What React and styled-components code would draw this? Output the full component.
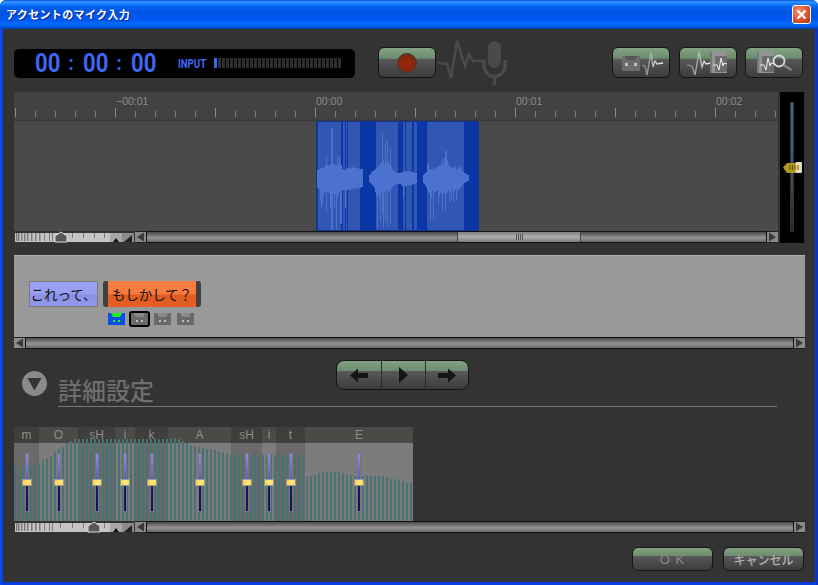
import React from "react";
import styled, { createGlobalStyle } from "styled-components";

const GlobalStyle = createGlobalStyle`
  html, body {
    margin: 0;
    padding: 0;
    background: #fff;
  }
  * {
    box-sizing: border-box;
  }
`;

const JP = `"Noto Sans CJK JP", "Liberation Sans", sans-serif`;
const TEAL = "#4a7272";

const Window = styled.div`
  width: 818px;
  height: 585px;
  display: flex;
  flex-direction: column;
  border-radius: 6px 6px 0 0;
  overflow: hidden;
  background: linear-gradient(90deg, #0a55ee 0, #0a3ee0 3px, #0a3ee0 815px, #0a2fc0 818px);
`;

const TitleBar = styled.div`
  height: 29px;
  flex: none;
  display: flex;
  align-items: center;
  justify-content: space-between;
  padding: 0 7px 1px 6px;
  background: linear-gradient(
    180deg,
    #0058e6 0,
    #3a93ff 7%,
    #127dff 14%,
    #0262ee 24%,
    #0054e3 40%,
    #0055eb 60%,
    #005bf5 72%,
    #026afe 80%,
    #0062ef 88%,
    #0052d6 94%,
    #0040ab 100%
  );
`;

const Title = styled.span`
  font: bold 11px ${JP};
  letter-spacing: 0.35px;
  color: #fff;
  text-shadow: 1px 1px 0 #0a2a90;
`;

const CloseButton = styled.div`
  width: 19px;
  height: 19px;
  display: flex;
  align-items: center;
  justify-content: center;
  border: 1px solid #fff;
  border-radius: 3px;
  background: radial-gradient(circle at 35% 30%, #f09070, #d8502a 60%, #b03010);
`;

const Body = styled.div`
  flex: 1;
  margin: 0 3px 3px;
  padding: 18px 10px 0 11px;
  background: #333;
  display: flex;
  flex-direction: column;
`;

const TopBar = styled.div`
  height: 31px;
  display: flex;
  align-items: center;
  padding-right: 2px;
`;

const TimePanel = styled.div`
  width: 341px;
  height: 29px;
  margin-top: 1px;
  margin-right: 23px;
  padding-left: 21px;
  display: flex;
  align-items: center;
  border-radius: 5px;
  background: #000;
  color: #3f66f2;
  font-family: Roboto, "Liberation Sans", sans-serif;
`;

const Digits = styled.span`
  width: 24px;
  font-size: 26px;
  font-weight: 700;
  line-height: 1;
  white-space: nowrap;
  transform: scaleX(0.85);
  transform-origin: left center;
`;

const Colon = styled.span`
  width: 24px;
  font-size: 20px;
  font-weight: 700;
  line-height: 1;
  text-align: center;
`;

const InputLabel = styled.span`
  width: 36px;
  margin-left: 23px;
  font-size: 13px;
  font-weight: 700;
  white-space: nowrap;
  transform: scaleX(0.74);
  transform-origin: left center;
`;

const Meter = styled.div`
  display: flex;
  gap: 1px;
`;

const MeterCell = styled.i`
  width: 3px;
  height: 10px;
  background: ${({ $on }) => ($on ? "#3f66f2" : "#2f2f2f")};
`;

const Glossy = styled.div`
  width: ${({ $w }) => $w || 58}px;
  height: ${({ $h }) => $h || 31}px;
  flex: none;
  display: flex;
  align-items: center;
  justify-content: center;
  border: 1px solid #151515;
  border-radius: 6px;
  background: linear-gradient(
    180deg,
    #84a284 0,
    #6c8c6e 36%,
    #585858 37%,
    #3c3c3c 100%
  );
`;

const RecordDot = styled.div`
  width: 20px;
  height: 20px;
  border-radius: 50%;
  border: 1px solid #3a3a3a;
  background: radial-gradient(circle at 45% 55%, #a02408, #7a2a10 70%, #5e3018);
`;

const MicLogo = styled.svg`
  width: 70px;
  height: 45px;
  margin-left: 2px;
  flex: none;
`;

const ToolGroup = styled.div`
  margin-left: auto;
  display: flex;
  gap: 8.5px;
`;

const TimelineRow = styled.div`
  margin-top: 14px;
  display: flex;
  gap: 2px;
`;

const TimelineMain = styled.div`
  width: 764px;
  display: flex;
  flex-direction: column;
`;

const Ruler = styled.div`
  height: 29px;
  padding-left: 102px;
  display: flex;
  overflow: hidden;
  background:
    linear-gradient(to right, #8c8c8c 1px, transparent 1px) 1px 16px / 100px 9px repeat-x,
    linear-gradient(to right, #7c7c7c 1px, transparent 1px) 1px 19px / 20px 6px repeat-x,
    #424242;
  border-bottom: 1px solid #383838;
`;

const RulerLabel = styled.span`
  flex: 0 0 200px;
  padding-top: 3px;
  font: 10.5px "Liberation Sans", sans-serif;
  color: #8c8c8c;
`;

const WaveArea = styled.div`
  height: 110px;
  padding-left: 302px;
  background: #4a4a4a;
`;

const Selection = styled.svg`
  display: block;
  width: 163px;
  height: 110px;
`;

const GainPanel = styled.div`
  width: 24px;
  height: 151px;
  padding-top: 10px;
  display: flex;
  justify-content: center;
  background: #000;
`;

const GainTrack = styled.div`
  position: relative;
  width: 4px;
  height: 130px;
  border: 1px solid #333;
  background: linear-gradient(180deg, #3f6b82 0, #3d5566 50%, #2c2424 100%);
`;

const GainThumb = styled.svg`
  position: absolute;
  left: -8px;
  top: 59px;
  width: 19px;
  height: 11px;
`;

const ScrollRow = styled.div`
  height: 12px;
  display: flex;
  background: #333;
`;

const ArrowButton = styled.div`
  width: 11px;
  flex: none;
  display: flex;
  align-items: center;
  justify-content: center;
  background: #8a8a8a;
  border: 1px solid #222;
  border-width: 1px 0;
`;

const Track = styled.div`
  flex: 1;
  display: flex;
  border: 1px solid #111;
  background: linear-gradient(180deg, #4a4a4a 0, #8c8c8c 50%, #949494 60%, #666 100%);
`;

const Thumb = styled.div`
  width: 124px;
  margin-left: ${({ $at }) => $at}px;
  display: flex;
  align-items: center;
  justify-content: center;
  gap: 1px;
  border-left: 1px solid #444;
  border-right: 1px solid #444;
  background: linear-gradient(180deg, #808080 0, #ababab 45%, #9c9c9c 70%, #787878 100%);
`;

const Grip = styled.i`
  width: 1px;
  height: 6px;
  background: #555;
`;

const ZoomStripBox = styled.svg`
  display: block;
  width: 121px;
  height: 12px;
  flex: none;
`;

const PhrasePanel = styled.div`
  margin-top: 12px;
  width: 791px;
  height: 82px;
  padding: 25px 15px 0;
  background: #999;
  border-top: 1px solid #b0b0b0;
`;

const PhraseRow = styled.div`
  display: flex;
  gap: 5px;
`;

const PhraseChip = styled.div`
  width: ${({ $w }) => $w}px;
  height: 26px;
  display: flex;
  align-items: center;
  justify-content: center;
  white-space: nowrap;
  font: 13.5px ${JP};
  color: #111;
  ${({ $active }) =>
    $active
      ? `background: linear-gradient(180deg, #f97d40 0, #f87a3e 48%, #e05c20 56%, #e65e24 100%);
         border-left: 5px solid #404040;
         border-right: 5px solid #404040;
         border-radius: 3px;`
      : `background: linear-gradient(180deg, #9ca4f8 0, #979ef0 48%, #8b92e6 56%, #9098ec 100%);
         border: 1px solid #7a7a7a;`}
`;

const VoiceRow = styled.div`
  margin: 4px 0 0 79px;
  display: flex;
  align-items: center;
  gap: 4px;
`;

const VoiceSvg = styled.svg`
  flex: none;
  margin-left: ${({ $ml }) => $ml || 0}px;
`;

const DetailArea = styled.div`
  margin-top: 11px;
  display: grid;
`;

const NavGroup = styled.div`
  grid-area: 1 / 1;
  justify-self: start;
  z-index: 1;
  margin-left: 322px;
  width: 133px;
  height: 30px;
  display: flex;
  border: 1px solid #151515;
  border-radius: 8px;
  overflow: hidden;
  background: linear-gradient(180deg, #84a284 0, #6c8c6e 36%, #585858 37%, #3c3c3c 100%);
`;

const NavCell = styled.div`
  flex: ${({ $w }) => `0 0 ${$w}px`};
  display: flex;
  align-items: center;
  justify-content: center;
  & + & {
    border-left: 1px solid #2a2a2a;
  }
`;

const DetailHeader = styled.div`
  grid-area: 1 / 1;
  margin: 11px 0 0 8px;
  display: flex;
  align-items: flex-start;
  gap: 11px;
`;

const DetailToggle = styled.div`
  width: 25px;
  height: 25px;
  flex: none;
  display: flex;
  align-items: center;
  justify-content: center;
  border-radius: 50%;
  background: #8a8a8a;
`;

const DetailTitle = styled.div`
  width: 719px;
  height: 36px;
  display: flex;
  align-items: flex-end;
  padding: 0 0 1px 0;
  border-bottom: 1px solid #777;
  font: 500 24px/30px ${JP};
  color: #6e6e6e;
`;

const Chart = styled.div`
  position: relative;
  margin-top: 20px;
  width: 399px;
  height: 94px;
  display: flex;
`;

const BarLayer = styled.svg`
  position: absolute;
  left: 0;
  bottom: 0;
  width: 399px;
  height: 84px;
`;

const PhonemeColumn = styled.div`
  width: ${({ $w }) => $w}px;
  display: flex;
  flex-direction: column;
`;

const PhonemeLabel = styled.div`
  height: 16px;
  text-align: center;
  font: 12px/16px "Liberation Sans", sans-serif;
  color: #8e8e8e;
  background: ${({ $alt }) => ($alt ? "#4a4a46" : "#3e3e3b")};
`;

const PhonemeBody = styled.div`
  flex: 1;
  padding-top: 10px;
  display: flex;
  justify-content: center;
  background: ${({ $alt }) => ($alt ? "#7c7c7c" : "#6a6a6a")};
`;

const PitchTrack = styled.div`
  position: relative;
  z-index: 1;
  width: 4px;
  height: 59px;
  border: 1px solid #777;
  background: linear-gradient(
    180deg,
    #8c8cee 0,
    #5a5ac2 45%,
    #3a3a9a 46%,
    #16166c 60%,
    #12125e 100%
  );
`;

const PitchThumb = styled.div`
  position: absolute;
  top: 25px;
  left: -4px;
  width: 10px;
  height: 7px;
  border: 1px solid #999;
  background: linear-gradient(90deg, #ffd040, #ffe98a 60%, #ffd850);
`;

const Footer = styled.div`
  margin-top: 14px;
  padding-right: 1px;
  display: flex;
  justify-content: flex-end;
  gap: 10px;
`;

const DialogButton = styled(Glossy)`
  font: ${({ $spaced }) => ($spaced ? `400 13px "Liberation Sans", sans-serif` : `500 12px ${JP}`)};
  letter-spacing: ${({ $spaced }) => ($spaced ? "1px" : "0")};
  color: ${({ $spaced }) => ($spaced ? "#8a8a8a" : "#b0b0b0")};
`;

const lerp = (pts, x) => {
  for (let i = 1; i < pts.length; i++) {
    if (x <= pts[i][0]) {
      const [x0, y0] = pts[i - 1];
      const [x1, y1] = pts[i];
      return y0 + ((y1 - y0) * (x - x0)) / (x1 - x0);
    }
  }
  return pts[pts.length - 1][1];
};

const BAR_POINTS = [
  [0, 54], [19, 56], [26, 59], [31, 63], [36, 65], [39, 68], [43, 71], [48, 74], [51, 78],
  [59, 82], [153, 82], [156, 83], [161, 83], [166, 81], [171, 78], [176, 76], [183, 74],
  [189, 73], [199, 71], [208, 68], [216, 66], [290, 66], [291, 44], [309, 49], [326, 49],
  [331, 46], [348, 45], [369, 45], [376, 42], [386, 41], [393, 38], [399, 41],
];

const PHONEMES = [
  ["m", 25], ["O", 39], ["sH", 37], ["i", 20], ["k", 33],
  ["A", 63], ["sH", 31], ["i", 14], ["t", 29], ["E", 108],
];

const BANDS = [
  [2, 23], [27, 2], [30, 1], [32, 3], [35, 9], [60, 22], [87, 2], [90, 2],
  [92, 4], [98, 3], [111, 37],
];

const WAVES = [
  {
    x: 1,
    up: [8, 8, 8, 9, 10, 10, 10, 11, 12, 22, 13, 12, 13, 14, 50, 50, 14, 13, 14, 12, 22, 14, 22, 15, 13, 9, 8, 8, 8, 9, 10, 11, 10, 11, 9, 11, 11, 10, 10, 10, 10, 9, 9, 9, 9, 9],
    down: [10, 10, 12, 22, 30, 26, 18, 14, 14, 34, 14, 13, 16, 30, 52, 52, 16, 30, 16, 52, 18, 16, 14, 46, 46, 12, 12, 12, 30, 12, 12, 11, 11, 12, 11, 10, 12, 11, 10, 10, 11, 10, 10, 10, 9, 9],
  },
  {
    x: 53,
    up: [3, 4, 6, 7, 7, 8, 9, 10, 12, 11, 13, 14, 16, 45, 18, 14, 36, 16, 38, 16, 14, 30, 12, 9, 8, 7, 6, 5, 5, 5, 5, 5, 6, 6, 6, 7, 7, 7, 6, 7, 7, 6, 6, 6, 6, 5, 5, 5],
    down: [4, 5, 6, 7, 8, 10, 14, 18, 50, 16, 20, 44, 14, 36, 50, 14, 44, 12, 48, 14, 12, 46, 10, 9, 8, 7, 7, 6, 6, 6, 6, 6, 7, 8, 20, 7, 9, 8, 7, 8, 7, 7, 7, 7, 6, 6, 5, 5],
  },
  {
    x: 107,
    up: [3, 4, 5, 6, 13, 14, 9, 8, 9, 8, 11, 10, 9, 10, 12, 11, 13, 12, 14, 19, 14, 20, 27, 27, 18, 14, 12, 10, 11, 9, 11, 10, 12, 8, 10, 9, 11, 10, 12, 7, 6, 5, 5, 4, 3, 3],
    down: [5, 6, 8, 9, 12, 14, 16, 43, 20, 12, 40, 14, 14, 13, 12, 27, 18, 13, 16, 32, 14, 16, 34, 14, 16, 12, 24, 14, 22, 11, 24, 13, 12, 22, 11, 13, 12, 10, 9, 7, 6, 5, 4, 4, 3, 3],
  },
];

const Ekg = ({ points, id }) => (
  <>
    <defs>
      <linearGradient id={id} x1="0" x2="1" y1="0" y2="0">
        <stop offset="0" stopColor="#777" />
        <stop offset="1" stopColor="#f2f2f2" />
      </linearGradient>
    </defs>
    <polyline points={points} fill="none" stroke={`url(#${id})`} strokeWidth="1.4" />
  </>
);

const ToolIcon = ({ children }) => (
  <svg width="56" height="29" viewBox="0 0 56 29">
    {children}
  </svg>
);

const Sheet = ({ x }) => (
  <g transform={`translate(${x} 3)`}>
    <rect x="0" y="1" width="3" height="21" fill="#777" />
    <rect x="2" y="0" width="15" height="22" fill="#949494" />
    <rect x="5" y="5" width="12" height="16" fill="#6c6c6c" />
    <polyline points="3,14 7,14 9,19 11,7 13,15 14,12 17,13" fill="none" stroke="#eee" strokeWidth="1" />
  </g>
);

const VoiceIcon = ({ kind, ml }) => {
  const selected = kind === "selected";
  const on = kind === "on";
  const w = selected ? 21 : 17;
  const h = selected ? 16 : 12;
  const off = selected ? 2 : 0;
  const face = on ? "#0a50e8" : "#6a6a6a";
  return (
    <VoiceSvg $ml={ml} width={w} height={h} viewBox={`0 0 ${w} ${h}`}>
      {selected && <rect x="1" y="1" width="19" height="14" rx="2" fill="#777" stroke="#000" strokeWidth="2" />}
      <rect x={off} y={off} width="17" height="12" fill={face} />
      <path d={`M${off + 3} ${off}h11l-2 4h-7z`} fill={on ? "#20f020" : "#8a8a8a"} />
      <rect x={off + 5} y={off + 7} width="2" height="2" fill={on ? "#20f020" : "#bbb"} />
      <rect x={off + 10} y={off + 7} width="2" height="2" fill={on ? "#20f020" : "#bbb"} />
    </VoiceSvg>
  );
};

const ZoomStrip = ({ thumb }) => {
  const marks = [2, 4, 7, 10, 13, 17, 21, 25, 30, 35, 38, 46, 58, 69, 80, 90];
  return (
    <ZoomStripBox viewBox="0 0 121 12">
      <rect x="1" y="2" width="95" height="9" fill="#c4c4c4" />
      {marks.map((x) => (
        <rect key={x} x={x} y="2" width={x < 26 ? 1.5 : 1} height={x < 40 ? 8 : 5} fill="#7c7c7c" />
      ))}
      <path d={`M${thumb - 6} 11v-6l6 -4l6 4v6z`} fill="#585858" stroke="#ddd" strokeWidth="1" />
      <rect x="96" y="2" width="12" height="9" fill="#a8a8a8" />
      <path d="M99 11l3 -4l3 4z" fill="#111" />
      <rect x="108" y="2" width="12" height="9" fill="#8c8c8c" />
      <path d="M110 11l8 -7v7z" fill="#222" />
    </ZoomStripBox>
  );
};

const Arrow = ({ dir }) => (
  <svg width="9" height="10" viewBox="0 0 9 10">
    <path d={dir === "left" ? "M1 5l7 -4.5v9z" : "M8 5l-7 -4.5v9z"} fill="#3a3a3a" />
  </svg>
);

const Scrollbar = ({ strip, thumbAt }) => (
  <ScrollRow>
    {strip !== undefined && <ZoomStrip thumb={strip} />}
    <ArrowButton>
      <Arrow dir="left" />
    </ArrowButton>
    <Track>
      {thumbAt !== undefined && (
        <Thumb $at={thumbAt}>
          <Grip />
          <Grip />
          <Grip />
          <Grip />
        </Thumb>
      )}
    </Track>
    <ArrowButton>
      <Arrow dir="right" />
    </ArrowButton>
  </ScrollRow>
);

const App = () => {
  const bars = [];
  for (let x = 0; x < 399; x += 4) {
    bars.push({ x, h: lerp(BAR_POINTS, x) });
  }

  return (
    <Window>
      <GlobalStyle />
      <TitleBar>
        <Title>アクセントのマイク入力</Title>
        <CloseButton>
          <svg width="11" height="11" viewBox="0 0 11 11">
            <path d="M1.5 1.5l8 8M9.5 1.5l-8 8" stroke="#fff" strokeWidth="2.2" />
          </svg>
        </CloseButton>
      </TitleBar>

      <Body>
        <TopBar>
          <TimePanel>
            <Digits>00</Digits>
            <Colon>:</Colon>
            <Digits>00</Digits>
            <Colon>:</Colon>
            <Digits>00</Digits>
            <InputLabel>INPUT</InputLabel>
            <Meter>
              {Array.from({ length: 32 }, (_, i) => (
                <MeterCell key={i} $on={i === 0} />
              ))}
            </Meter>
          </TimePanel>
          <Glossy>
            <RecordDot />
          </Glossy>
          <MicLogo viewBox="0 0 70 45">
            <polyline
              points="0,23 9,24 13,38 19,1 27,26 31,14 35,21 46,21"
              fill="none"
              stroke="#4a4a4a"
              strokeWidth="2.5"
            />
            <rect x="50" y="1" width="13" height="27" rx="6.5" fill="#4a4a4a" />
            <path d="M46 20v6a10.5 10.5 0 0 0 21 0v-6M56.5 36v9" fill="none" stroke="#4a4a4a" strokeWidth="3.5" />
          </MicLogo>
          <ToolGroup>
            <Glossy>
              <ToolIcon>
                <path d="M9 8h18v15h-18z" fill="#6c6c6c" />
                <path d="M12 8h12l-2 4h-8z" fill="#555" />
                <rect x="12" y="15" width="3" height="3" fill="#c0c0c0" />
                <rect x="21" y="15" width="3" height="3" fill="#c0c0c0" />
                <Ekg id="ekg-a" points="29,17 32,18 34,27 38,4 40,19 42,13 44,16 50,15" />
              </ToolIcon>
            </Glossy>
            <Glossy>
              <ToolIcon>
                <Ekg id="ekg-b" points="7,17 12,18 15,27 19,4 22,19 24,13 26,16 31,15" />
                <Sheet x={30} />
              </ToolIcon>
            </Glossy>
            <Glossy>
              <ToolIcon>
                <Sheet x={11} />
                <circle cx="33" cy="13" r="5.5" fill="none" stroke="#ddd" strokeWidth="1.8" />
                <path d="M37.5 17l8 5" stroke="#888" strokeWidth="2.4" />
              </ToolIcon>
            </Glossy>
          </ToolGroup>
        </TopBar>

        <TimelineRow>
          <TimelineMain>
            <Ruler>
              <RulerLabel>−00:01</RulerLabel>
              <RulerLabel>00:00</RulerLabel>
              <RulerLabel>00:01</RulerLabel>
              <RulerLabel>00:02</RulerLabel>
            </Ruler>
            <WaveArea>
              <Selection viewBox="0 0 163 110" shapeRendering="crispEdges">
                <rect width="163" height="110" fill="#0a36a6" />
                {BANDS.map(([x, w]) => (
                  <rect key={x} x={x} y="1" width={w} height="108" fill="#3157b3" />
                ))}
                {WAVES.map((seg) =>
                  seg.up.map((u, i) => (
                    <rect
                      key={`${seg.x}-${i}`}
                      x={seg.x + i}
                      y={57 - u}
                      width="1"
                      height={u + seg.down[i]}
                      fill="#4c72cf"
                    />
                  ))
                )}
                <rect x="0.5" y="0.5" width="162" height="109" fill="none" stroke="#12349a" />
              </Selection>
            </WaveArea>
            <Scrollbar strip={47} thumbAt={310} />
          </TimelineMain>
          <GainPanel>
            <GainTrack>
              <GainThumb viewBox="0 0 19 11">
                <path d="M0 5.5l4 -4.5h9v10h-9z" fill="#b09a20" />
                <rect x="13" y="0.5" width="5.5" height="10" fill="#f8e0a0" stroke="#ccc" />
                <path d="M7 3v5M9.5 3v5M12 3v5M15 3v5" stroke="#6a5008" />
              </GainThumb>
            </GainTrack>
          </GainPanel>
        </TimelineRow>

        <PhrasePanel>
          <PhraseRow>
            <PhraseChip $w={69}>これって、</PhraseChip>
            <PhraseChip $w={98} $active>
              もしかして？
            </PhraseChip>
          </PhraseRow>
          <VoiceRow>
            <VoiceIcon kind="on" />
            <VoiceIcon kind="selected" />
            <VoiceIcon kind="off" />
            <VoiceIcon kind="off" ml={2} />
          </VoiceRow>
        </PhrasePanel>
        <Scrollbar />

        <DetailArea>
          <NavGroup>
            <NavCell $w={44}>
              <svg width="18" height="15" viewBox="0 0 18 15">
                <path d="M0 7.5l8 -7v4.5h10v5h-10v4.5z" fill="#151515" />
              </svg>
            </NavCell>
            <NavCell $w={44}>
              <svg width="9" height="16" viewBox="0 0 9 16">
                <path d="M0 0l9 8l-9 8z" fill="#151515" />
              </svg>
            </NavCell>
            <NavCell $w={43}>
              <svg width="18" height="15" viewBox="0 0 18 15">
                <path d="M18 7.5l-8 -7v4.5h-10v5h10v4.5z" fill="#151515" />
              </svg>
            </NavCell>
          </NavGroup>
          <DetailHeader>
            <DetailToggle>
              <svg width="15" height="14" viewBox="0 0 15 14">
                <path d="M0.5 1h14l-7 12.5z" fill="#333" />
              </svg>
            </DetailToggle>
            <DetailTitle>詳細設定</DetailTitle>
          </DetailHeader>
        </DetailArea>

        <Chart>
          {PHONEMES.map(([name, w], i) => (
            <PhonemeColumn key={i} $w={w}>
              <PhonemeLabel $alt={i % 2 === 1}>{name}</PhonemeLabel>
              <PhonemeBody $alt={i % 2 === 1}>
                <PitchTrack>
                  <PitchThumb />
                </PitchTrack>
              </PhonemeBody>
            </PhonemeColumn>
          ))}
          <BarLayer viewBox="0 0 399 84" shapeRendering="crispEdges">
            {bars.map((b) => (
              <rect key={b.x} x={b.x} y={84 - b.h} width="2" height={b.h} fill={TEAL} />
            ))}
          </BarLayer>
        </Chart>
        <Scrollbar strip={80} />

        <Footer>
          <DialogButton $w={81} $h={24} $spaced>
            O K
          </DialogButton>
          <DialogButton $w={81} $h={24}>
            キャンセル
          </DialogButton>
        </Footer>
      </Body>
    </Window>
  );
};

export default App;
